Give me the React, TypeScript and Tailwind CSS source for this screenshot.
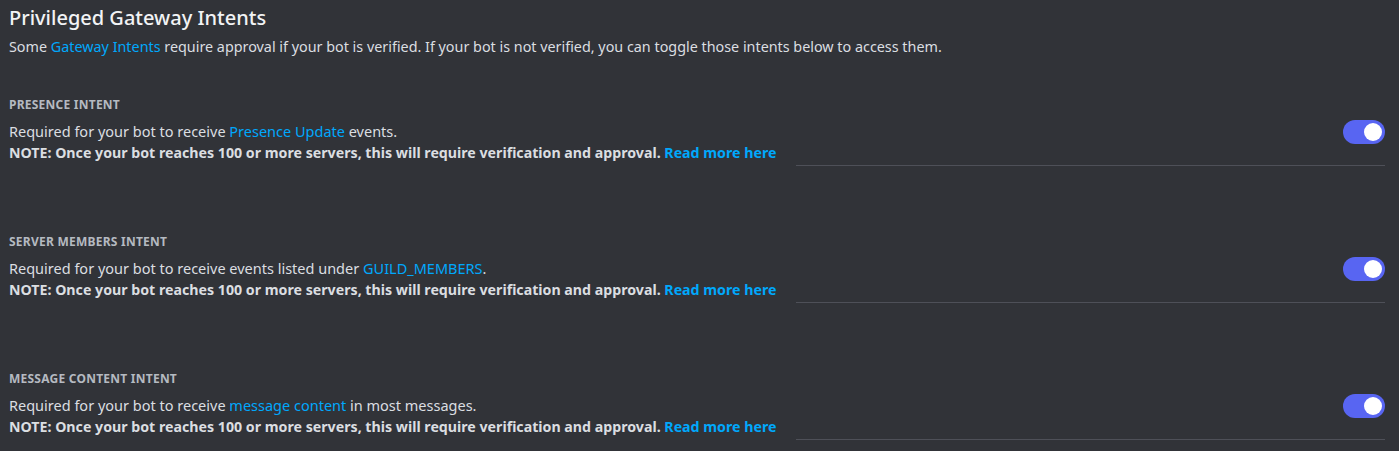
const intents = [
  {
    label: "PRESENCE INTENT",
    before: "Required for your bot to receive ",
    link: "Presence Update",
    after: " events.",
  },
  {
    label: "SERVER MEMBERS INTENT",
    before: "Required for your bot to receive events listed under ",
    link: "GUILD_MEMBERS",
    after: ".",
  },
  {
    label: "MESSAGE CONTENT INTENT",
    before: "Required for your bot to receive ",
    link: "message content",
    after: " in most messages.",
  },
]

function Toggle() {
  return (
    <div className="w-[42px] h-[24px] mt-[-1px] rounded-full bg-[#5865f2] flex items-center justify-end px-[3px] shrink-0">
      <div className="w-[18px] h-[18px] rounded-full bg-white" />
    </div>
  )
}

export default function App() {
  return (
    <div
      className="w-[1399px] h-[451px] bg-[#313338] text-[#dbdee1] pl-[9px] pr-[14px] pt-[5px] overflow-hidden"
      style={{ fontFamily: '"Noto Sans", sans-serif' }}
    >
      {/* Header */}
      <h1 className="text-[20px] leading-[26px] font-medium text-[#f2f3f5]">Privileged Gateway Intents</h1>
      <p className="text-[14.35px] leading-[20px] mt-[6px]">
        Some <span className="text-[#00a8fc]">Gateway Intents</span> require approval if your bot is verified. If your
        bot is not verified, you can toggle those intents below to access them.
      </p>

      {/* Intents */}
      <div className="mt-[40px]">
        {intents.map((intent) => (
          <div key={intent.label} className="mb-[68px]">
            <div className="text-[12px] leading-[16px] font-bold text-[#b5bac1] tracking-[0.02em]">{intent.label}</div>
            <div className="flex items-start justify-between mt-[8px]">
              <div className="leading-[21px]">
                <div className="text-[14.5px]">
                  {intent.before}
                  <span className="text-[#00a8fc]">{intent.link}</span>
                  {intent.after}
                </div>
                <div className="font-bold text-[14.2px]">
                  NOTE: Once your bot reaches 100 or more servers, this will require verification and approval.{" "}
                  <span className="text-[#00a8fc]">Read more here</span>
                </div>
              </div>
              <Toggle />
            </div>
            <div className="flex justify-end mt-[2px]">
              <div className="w-[589px] border-t border-[#4e5058]" />
            </div>
          </div>
        ))}
      </div>
    </div>
  )
}
